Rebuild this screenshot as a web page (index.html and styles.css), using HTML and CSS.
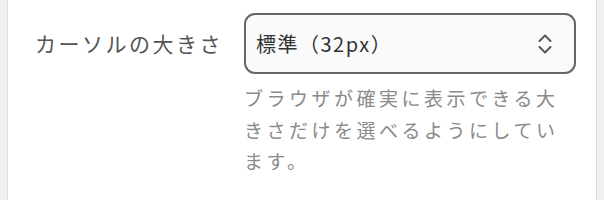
FILE: index.html
```html
<!DOCTYPE html>
<html lang="ja">
<head>
    <meta charset="UTF-8">
    <title>カーソルの大きさ</title>
    <link rel="stylesheet" href="styles.css">
</head>
<body>
    <div class="panel">
        <div class="setting-row">
            <label class="setting-label" for="cursor-size">カーソルの大きさ</label>
            <div class="setting-control">
                <div class="select-box" id="cursor-size">
                    <span class="select-value">標準（32px）</span>
                    <svg class="select-icon" width="16" height="24" viewBox="0 0 16 24">
                        <polyline points="2.5,9 8,3.5 13.5,9" fill="none" stroke="#555" stroke-width="2" stroke-linecap="round" stroke-linejoin="round"/>
                        <polyline points="2.5,15 8,20.5 13.5,15" fill="none" stroke="#555" stroke-width="2" stroke-linecap="round" stroke-linejoin="round"/>
                    </svg>
                </div>
                <p class="setting-help">ブラウザが確実に表示できる大きさだけを選べるようにしています。</p>
            </div>
        </div>
    </div>
</body>
</html>
```

FILE: styles.css
```css
body {
    margin: 0;
    background-color: #f0f0f0;
    font-family: "Noto Sans CJK JP", "Noto Sans", sans-serif;
}
.panel {
    margin: 0 7px;
    height: 200px;
    box-sizing: border-box;
    background-color: #fff;
    border-left: 1px solid #dcdcdc;
    border-right: 1px solid #dcdcdc;
    padding: 13px 20px 0 27px;
}
.setting-row {
    display: flex;
    align-items: flex-start;
}
.setting-label {
    width: 209px;
    flex-shrink: 0;
    line-height: 61px;
    font-size: 21px;
    letter-spacing: 2.5px;
    color: #555;
}
.setting-control {
    flex: 1;
}
.select-box {
    display: flex;
    align-items: center;
    justify-content: space-between;
    height: 61px;
    box-sizing: border-box;
    padding: 0 21px 0 10px;
    border: 2px solid #666;
    border-radius: 11px;
    background-color: #fafafa;
}
.select-value {
    font-size: 20px;
    letter-spacing: 1.5px;
    color: #333;
}
.select-icon {
    display: block;
}
.setting-help {
    margin: 8px 0 0 0;
    font-size: 19px;
    line-height: 31.5px;
    letter-spacing: 3.5px;
    color: #8a8a8a;
}
```
